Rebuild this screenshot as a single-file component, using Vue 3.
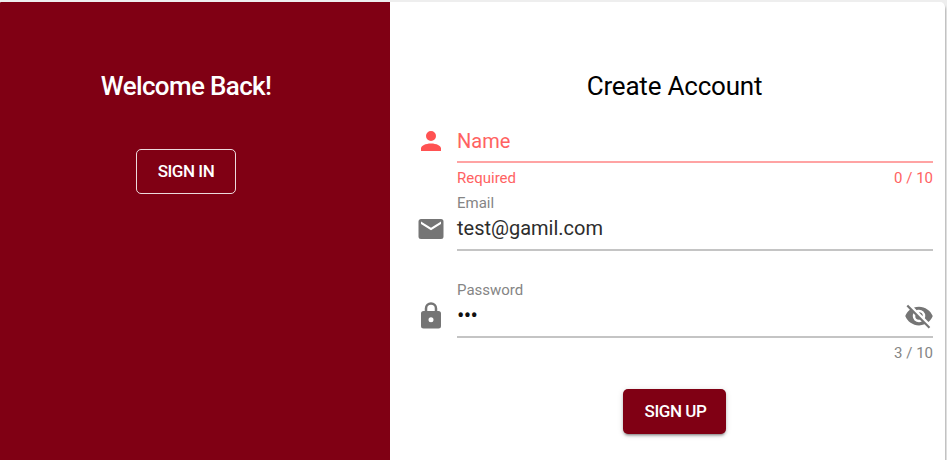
<script setup>
const fields = [
  {
    id: 'name', label: 'Name', value: '', hint: 'Required', counter: '0 / 10', error: true,
    icon: 'M12 4a4 4 0 1 1 0 8 4 4 0 0 1 0-8m0 10c4.42 0 8 1.79 8 4v2H4v-2c0-2.21 3.58-4 8-4z',
  },
  {
    id: 'email', label: 'Email', value: 'test@gamil.com', hint: '', counter: '',
    icon: 'M20 8l-8 5-8-5V6l8 5 8-5m0-2H4c-1.11 0-2 .89-2 2v12a2 2 0 0 0 2 2h16a2 2 0 0 0 2-2V6a2 2 0 0 0-2-2z',
  },
  {
    id: 'password', label: 'Password', value: '•••', hint: '', counter: '3 / 10', secret: true,
    icon: 'M12 17a2 2 0 0 0 2-2 2 2 0 0 0-2-2 2 2 0 0 0-2 2 2 2 0 0 0 2 2m6-9a2 2 0 0 1 2 2v10a2 2 0 0 1-2 2H6a2 2 0 0 1-2-2V10a2 2 0 0 1 2-2h1V6a5 5 0 0 1 10 0v2h1m-6-5a3 3 0 0 0-3 3v2h6V6a3 3 0 0 0-3-3z',
  },
]
const eyeOff = 'M11.83 9L15 12.16V12a3 3 0 0 0-3-3h-.17m-4.3.8l1.55 1.55c-.05.21-.08.42-.08.65a3 3 0 0 0 3 3c.22 0 .44-.03.65-.08l1.55 1.55c-.67.33-1.41.53-2.2.53a5 5 0 0 1-5-5c0-.79.2-1.53.53-2.2M2 4.27l2.28 2.28.45.45C3.08 8.3 1.78 10 1 12c1.73 4.39 6 7.5 11 7.5 1.55 0 3.03-.3 4.38-.84l.43.42L19.73 22 21 20.73 3.27 3M12 7a5 5 0 0 1 5 5c0 .64-.13 1.26-.36 1.82l2.93 2.93c1.5-1.25 2.7-2.89 3.43-4.75-1.73-4.39-6-7.5-11-7.5-1.4 0-2.74.25-4 .7l2.17 2.15C10.74 7.13 11.35 7 12 7z'
</script>

<template>
  <main class="page">
    <div class="card">
      <section class="welcome">
        <h1 class="title light">Welcome Back!</h1>
        <button class="btn outlined">SIGN IN</button>
      </section>
      <section class="create">
        <h1 class="title">Create Account</h1>
        <form class="form">
          <div v-for="f in fields" :key="f.id" class="field" :class="{ error: f.error }">
            <svg class="icon" viewBox="0 0 24 24"><path :d="f.icon" /></svg>
            <div class="control">
              <div class="label">{{ f.value ? f.label : '' }}</div>
              <div class="slot">
                <span v-if="f.value" class="value" :class="{ secret: f.secret }">{{ f.value }}</span>
                <span v-else class="placeholder">{{ f.label }}</span>
                <svg v-if="f.secret" class="icon eye" viewBox="0 0 24 24"><path :d="eyeOff" /></svg>
              </div>
              <div class="details"><span>{{ f.hint }}</span><span>{{ f.counter }}</span></div>
            </div>
          </div>
        </form>
        <button class="btn filled">SIGN UP</button>
      </section>
    </div>
  </main>
</template>

<style>
body { background: #eee; overflow: hidden; }
</style>

<style scoped>
.page {
  box-sizing: border-box;
  height: 460px;
  padding: 2px 2px 0 0;
  overflow: hidden;
  font-family: Roboto, sans-serif;
}
.card {
  display: flex;
  height: 480px;
  border-radius: 1px 5px 5px 1px;
  overflow: hidden;
  background: #fff;
  box-shadow: 0 3px 2px 1px rgba(0, 0, 0, .25);
}
.welcome {
  width: 390px;
  flex: none;
  box-sizing: border-box;
  padding-right: 18px;
  background: #800014;
  display: flex;
  flex-direction: column;
  align-items: center;
}
.create {
  flex: 1;
  display: flex;
  flex-direction: column;
  align-items: center;
}
.title {
  margin: 68px 0 0;
  font-size: 26px;
  line-height: 32px;
  font-weight: 400;
  letter-spacing: -.2px;
  color: #000;
  white-space: nowrap;
}
.create .title { margin-left: 14px; }
.title.light {
  color: #fff;
  font-weight: 500;
  letter-spacing: -.65px;
}
.btn {
  box-sizing: border-box;
  height: 45px;
  padding: 0;
  border-radius: 5px;
  font: 500 17px/20px Roboto, sans-serif;
  letter-spacing: -.45px;
  color: #fff;
}
.outlined {
  width: 100px;
  margin-top: 47px;
  padding-bottom: 1px;
  border: 1px solid rgba(255, 255, 255, .85);
  background: transparent;
}
.filled {
  width: 103px;
  margin: 20px 0 0 14px;
  padding-left: 2px;
  border: 0;
  background: #800014;
  box-shadow: 0 3px 2px -2px rgba(0, 0, 0, .25), 0 2px 3px rgba(0, 0, 0, .2), 0 1px 6px rgba(0, 0, 0, .12);
}
.form {
  align-self: stretch;
  padding: 4px 12px 0 26px;
}
.field {
  display: flex;
  height: 87.5px;
  color: #858585;
}
.icon {
  width: 30px;
  height: 30px;
  flex: none;
  fill: #757575;
}
.field > .icon { margin: 20px 11px 0 0; }
.control { flex: 1; }
.label {
  height: 16px;
  font-size: 15px;
  line-height: 18px;
}
.slot {
  display: flex;
  align-items: center;
  justify-content: space-between;
  box-sizing: border-box;
  height: 41px;
  padding-bottom: 2px;
  border-bottom: 2px solid #c4c4c4;
  font-size: 20px;
}
.value { color: #2d2d2d; }
.secret { font-size: 22px; letter-spacing: -.7px; color: #111; }
.eye { margin-right: -1px; }
.placeholder { color: #ff6262; }
.details {
  display: flex;
  justify-content: space-between;
  padding-top: 6px;
  font-size: 15px;
  line-height: 18px;
}
.error { color: #ff6262; }
.error .icon { fill: #ff5252; }
.error .slot { border-color: #ffa3a3; }
</style>
